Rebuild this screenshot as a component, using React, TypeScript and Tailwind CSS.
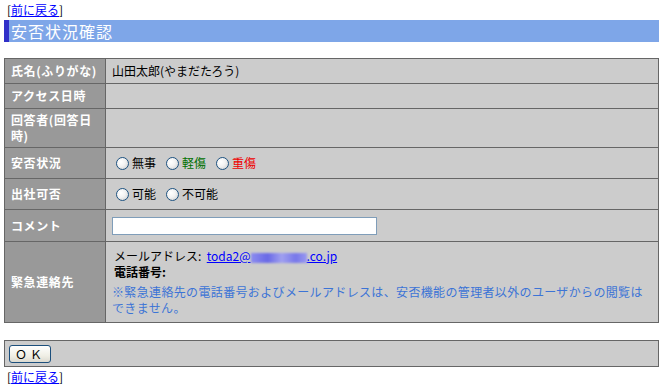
const font = "font-['MS_UI_Gothic','Noto_Sans_CJK_JP',sans-serif]";

function BackLink() {
  return (
    <div className="pl-[7px] text-[12px] leading-[15px] text-black">
      [<a href="#" className="text-[#0000ff] underline">前に戻る</a>]
    </div>
  );
}

function Radio({ label, color }: { label: string; color: string }) {
  return (
    <span className="mr-[10px] inline-flex items-center gap-[3px]">
      <span className="inline-block h-[13px] w-[13px] rounded-full border border-[#1c5180] bg-[radial-gradient(circle_at_35%_35%,#ffffff_0%,#f2f2f2_45%,#c8c8c8_100%)]" />
      <span className={color}>{label}</span>
    </span>
  );
}

function Label({ children }: { children: React.ReactNode }) {
  return (
    <td className="w-[101px] border border-[#666666] bg-[#999999] px-[6px] align-middle text-[12px] leading-[16px] font-bold tracking-[0.6px] text-white">
      {children}
    </td>
  );
}

function Value({ children }: { children?: React.ReactNode }) {
  return (
    <td className="border border-[#666666] bg-[#cccccc] px-[6px] align-middle text-[12px] leading-[16px] text-black">
      {children}
    </td>
  );
}

export default function App() {
  return (
    <div className={`${font} min-h-[387px] w-[665px] bg-white pt-[2px] pl-[4px] pr-[6px]`}>
      <div className="-ml-[4px]">
        <BackLink />
      </div>

      <div className="mt-[3px] flex h-[22px] items-center border-l-[5px] border-[#3030c8] bg-[#7ea6e8] pl-[2px]">
        <h1 className="text-[16px] leading-[22px] font-normal tracking-[1px] text-white">安否状況確認</h1>
      </div>

      <table className="mt-[16px] w-full border-collapse border border-[#666666]">
        <tbody>
          <tr className="h-[25px]">
            <Label>氏名(ふりがな)</Label>
            <Value>山田太郎(やまだたろう)</Value>
          </tr>
          <tr className="h-[25px]">
            <Label>アクセス日時</Label>
            <Value />
          </tr>
          <tr className="h-[39px]">
            <Label>
              回答者(回答日
              <br />
              時)
            </Label>
            <Value />
          </tr>
          <tr className="h-[31px]">
            <Label>安否状況</Label>
            <Value>
              <div className="flex items-center pl-[4px]">
                <Radio label="無事" color="text-black" />
                <Radio label="軽傷" color="text-[#007000]" />
                <Radio label="重傷" color="text-[#ee0000]" />
              </div>
            </Value>
          </tr>
          <tr className="h-[31px]">
            <Label>出社可否</Label>
            <Value>
              <div className="flex items-center pl-[4px]">
                <Radio label="可能" color="text-black" />
                <Radio label="不可能" color="text-black" />
              </div>
            </Value>
          </tr>
          <tr className="h-[32px]">
            <Label>コメント</Label>
            <Value>
              <input
                type="text"
                className="block h-[18px] w-[265px] border border-[#7f9db9] bg-white px-[2px] text-[12px] outline-none"
              />
            </Value>
          </tr>
          <tr className="h-[81px]">
            <Label>緊急連絡先</Label>
            <Value>
              <div className="pl-[2px]">
                メールアドレス:&nbsp;{" "}
                <a href="#" className="text-[#0000ff] underline">
                  toda2@
                  <span className="inline-block h-[10px] w-[56px] align-middle bg-[linear-gradient(90deg,#8c8cf0,#6a6ae6_30%,#a0a0f0_55%,#7878ea_80%,#9a9af0)] blur-[1px]" />
                  .co.jp
                </a>
              </div>
              <div className="pl-[2px] font-bold">電話番号:</div>
              <div className="mt-[4px] tracking-[0.35px] text-[#3c74d6]">
                ※緊急連絡先の電話番号およびメールアドレスは、安否機能の管理者以外のユーザからの閲覧は
                <br />
                できません。
              </div>
            </Value>
          </tr>
        </tbody>
      </table>

      <div className="mt-[17px] flex h-[27px] items-center border border-[#666666] bg-[#cccccc] pl-[4px]">
        <button
          type="button"
          className="h-[18px] w-[42px] rounded-[3px] border border-[#1c4f7c] bg-[linear-gradient(#ffffff,#f0efe6_60%,#dcdad0)] text-[12px] leading-[16px] tracking-[3px] text-black"
        >
          ＯＫ
        </button>
      </div>

      <div className="-ml-[4px] mt-[2px]">
        <BackLink />
      </div>
    </div>
  );
}
